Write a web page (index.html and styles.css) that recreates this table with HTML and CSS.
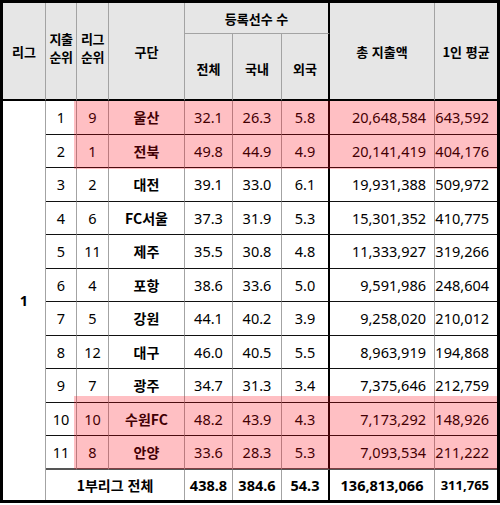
FILE: index.html
```html
<!DOCTYPE html>
<html lang="ko">
<head>
<meta charset="utf-8">
<link rel="stylesheet" href="styles.css">
</head>
<body>
<div class="frame">
<table class="tbl">
<colgroup>
<col class="c1"><col class="c2"><col class="c3"><col class="c4"><col class="c5"><col class="c6"><col class="c7"><col class="c8"><col class="c9">
</colgroup>
<thead>
<tr class="h1">
<th rowspan="2">리그</th>
<th rowspan="2" class="two"><div class="ln">지출</div><div class="ln">순위</div></th>
<th rowspan="2" class="two"><div class="ln">리그</div><div class="ln">순위</div></th>
<th rowspan="2">구단</th>
<th colspan="3" class="grp">등록선수 수</th>
<th rowspan="2">총 지출액</th>
<th rowspan="2" class="last">1인 평균</th>
</tr>
<tr class="h2">
<th>전체</th><th>국내</th><th class="sep">외국</th>
</tr>
</thead>
<tbody>
<tr><td rowspan="12" class="lg">1</td><td>1</td><td>9</td><td class="tm">울산</td><td>32.1</td><td>26.3</td><td class="sep">5.8</td><td class="amt">20,648,584</td><td class="avg">643,592</td></tr>
<tr><td>2</td><td>1</td><td class="tm">전북</td><td>49.8</td><td>44.9</td><td class="sep">4.9</td><td class="amt">20,141,419</td><td class="avg">404,176</td></tr>
<tr><td>3</td><td>2</td><td class="tm">대전</td><td>39.1</td><td>33.0</td><td class="sep">6.1</td><td class="amt">19,931,388</td><td class="avg">509,972</td></tr>
<tr><td>4</td><td>6</td><td class="tm">FC서울</td><td>37.3</td><td>31.9</td><td class="sep">5.3</td><td class="amt">15,301,352</td><td class="avg">410,775</td></tr>
<tr><td>5</td><td>11</td><td class="tm">제주</td><td>35.5</td><td>30.8</td><td class="sep">4.8</td><td class="amt">11,333,927</td><td class="avg">319,266</td></tr>
<tr><td>6</td><td>4</td><td class="tm">포항</td><td>38.6</td><td>33.6</td><td class="sep">5.0</td><td class="amt">9,591,986</td><td class="avg">248,604</td></tr>
<tr><td>7</td><td>5</td><td class="tm">강원</td><td>44.1</td><td>40.2</td><td class="sep">3.9</td><td class="amt">9,258,020</td><td class="avg">210,012</td></tr>
<tr><td>8</td><td>12</td><td class="tm">대구</td><td>46.0</td><td>40.5</td><td class="sep">5.5</td><td class="amt">8,963,919</td><td class="avg">194,868</td></tr>
<tr><td>9</td><td>7</td><td class="tm">광주</td><td>34.7</td><td>31.3</td><td class="sep">3.4</td><td class="amt">7,375,646</td><td class="avg">212,759</td></tr>
<tr><td>10</td><td>10</td><td class="tm">수원FC</td><td>48.2</td><td>43.9</td><td class="sep">4.3</td><td class="amt">7,173,292</td><td class="avg">148,926</td></tr>
<tr class="r11"><td>11</td><td>8</td><td class="tm">안양</td><td>33.6</td><td>28.3</td><td class="sep">5.3</td><td class="amt">7,093,534</td><td class="avg">211,222</td></tr>
<tr class="total"><td colspan="3">1부리그 전체</td><td>438.8</td><td>384.6</td><td class="sep">54.3</td><td class="tamt">136,813,066</td><td class="tavg">311,765</td></tr>
</tbody>
</table>
<div class="hl hl-top"></div>
<div class="hl hl-bottom"></div>
</div>
</body>
</html>
```
FILE: styles.css
```css
html, body {
  margin: 0;
  padding: 0;
  background: #ffffff;
}
.frame {
  position: relative;
  width: 494px;
  border: 3px solid #000;
  margin: 0;
}
.tbl {
  border-collapse: separate;
  border-spacing: 0;
  table-layout: fixed;
  width: 494px;
  font-family: "Noto Sans", "Noto Sans CJK KR", sans-serif;
  font-size: 14.5px;
  color: #000;
}
.c1 { width: 43px; }
.c2 { width: 31px; }
.c3 { width: 32px; }
.c4 { width: 76px; }
.c5 { width: 48px; }
.c6 { width: 49px; }
.c7 { width: 48px; }
.c8 { width: 105px; }
.c9 { width: 62px; }
th, td {
  padding: 0;
  border-right: 1px solid #a3a3a3;
  border-bottom: 1px solid #111;
  text-align: center;
  vertical-align: middle;
  box-sizing: border-box;
  white-space: nowrap;
}
th {
  background: #e6e6e6;
  font-family: "Noto Sans CJK KR", sans-serif;
  font-weight: 700;
  font-size: 13px;
  border-bottom: 2px solid #000;
}
th.two {
  padding-bottom: 6px;
  letter-spacing: -0.5px;
}
th.two .ln {
  height: 18px;
  line-height: 18px;
}
.h1 { height: 31px; }
.h1 th.grp {
  border-bottom: 1px solid #a3a3a3;
  border-right: 2px solid #000;
  height: 31px;
}
.h2 { height: 67px; }
.h2 th { padding-top: 4px; }
th.sep, td.sep { border-right: 2px solid #000; }
th.last, td.avg, td.tavg { border-right: none; }
tbody tr { height: 33.5px; }
td { font-weight: 400; }
td.lg {
  font-weight: 700;
  border-bottom: none;
}
td.tm {
  font-family: "Noto Sans CJK KR", sans-serif;
  font-weight: 700;
  font-size: 14px;
}
td.amt { text-align: right; padding-right: 8px; }
td.avg { text-align: right; padding-right: 8px; }
tr.r11 td { border-bottom: 2px solid #555; }
tr.total { height: 30px; }
tr.total td {
  font-weight: 700;
  border-bottom: none;
}
tr.total td:first-child {
  font-family: "Noto Sans CJK KR", sans-serif;
  font-size: 14px;
}
td.tavg {
  text-align: right;
  padding-right: 8px;
  font-size: 13px;
}
.hl {
  position: absolute;
  left: 71px;
  right: 0;
  background: rgba(255, 0, 16, 0.25);
  pointer-events: none;
}
.hl-top { top: 98px; height: 68px; }
.hl-bottom { top: 393px; height: 73px; }
```
